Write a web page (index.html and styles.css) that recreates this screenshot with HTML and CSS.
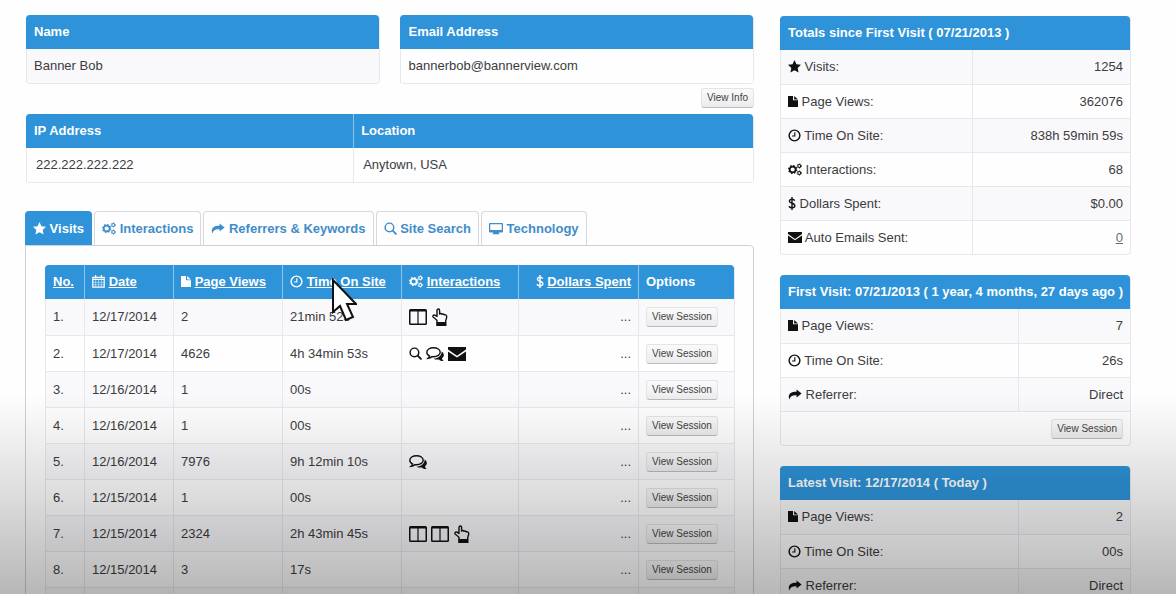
FILE: index.html
```html
<!DOCTYPE html>
<html lang="en">
<head>
    <meta charset="UTF-8">
    <meta name="viewport" content="width=device-width, initial-scale=1.0">
    <title>Visitor Details</title>
    <link rel="stylesheet" href="styles.css">
</head>
<body>

<!-- Icons -->
<svg class="sprite" aria-hidden="true">
    <symbol id="star" viewBox="0 0 16 16"><path d="M8 0l2.400 5.200 5.600.7-4.100 3.900 1.100 5.700L8 12.700 3 15.500l1.100-5.700L0 5.900l5.600-.7z"/></symbol>
    <symbol id="file" viewBox="0 0 13 16"><path d="M0 1h6.500v5.500H13V15H0zM8 1l5 4.500H8z"/></symbol>
    <symbol id="clock" viewBox="0 0 16 16"><circle cx="8" cy="8" r="6.600" fill="none" stroke="currentColor" stroke-width="1.800"/><path d="M8.400 4v4.600H5" fill="none" stroke="currentColor" stroke-width="1.400"/></symbol>
    <symbol id="cogs" viewBox="0 0 18 16">
        <circle cx="6" cy="8" r="3.800" fill="none" stroke="currentColor" stroke-width="2.200"/>
        <circle cx="6" cy="8" r="5.200" fill="none" stroke="currentColor" stroke-width="1.500" stroke-dasharray="2.040 2.040"/>
        <circle cx="14.500" cy="3.500" r="1.900" fill="none" stroke="currentColor" stroke-width="1.400"/>
        <circle cx="14.500" cy="3.500" r="2.900" fill="none" stroke="currentColor" stroke-width=".9" stroke-dasharray="1.500 1.540"/>
        <circle cx="14.500" cy="12.500" r="1.900" fill="none" stroke="currentColor" stroke-width="1.400"/>
        <circle cx="14.500" cy="12.500" r="2.900" fill="none" stroke="currentColor" stroke-width=".9" stroke-dasharray="1.500 1.540"/>
    </symbol>
    <symbol id="dollar" viewBox="0 0 9 16"><path d="M4.500 0v16M8 4.500C7.200 3.300 6 2.700 4.500 2.700c-1.900 0-3.200.9-3.200 2.400C1.300 8.400 8 7 8 10.800c0 1.500-1.400 2.500-3.400 2.500-1.600 0-3-.6-3.900-1.900" fill="none" stroke="currentColor" stroke-width="1.700"/></symbol>
    <symbol id="envelope" viewBox="0 0 18 16"><path d="M0 1h18v2.600L9 9.800 0 3.600zM0 5.400l9 6.200 9-6.200V15H0z"/></symbol>
    <symbol id="share" viewBox="0 0 18 16"><path d="M11 1.500l6.500 5.300L11 12V8.900c-5-.4-8 .8-9.200 5.600C-.8 8.300 3 4.300 11 4.500z"/></symbol>
    <symbol id="search" viewBox="0 0 16 16"><circle cx="6.700" cy="6.700" r="5.300" fill="none" stroke="currentColor" stroke-width="1.800"/><path d="M10.700 10.700l4 4" stroke="currentColor" stroke-width="2.200" stroke-linecap="round"/></symbol>
    <symbol id="desktop" viewBox="0 0 18 16"><path fill-rule="evenodd" d="M1 1h16q1 0 1 1v10q0 1-1 1h-4.500l.8 2.500H4.700l.8-2.500H1q-1 0-1-1V2q0-1 1-1zm.6 1.500V10h14.800V2.500z"/></symbol>
    <symbol id="calendar" viewBox="0 0 16 16"><path d="M1 3h14v12H1zM1 5.500h14M4.500 0v4M11.500 0v4" fill="none" stroke="currentColor" stroke-width="1.500"/><path d="M1 9h14M1 12h14M4.500 6v9M8 6v9M11.500 6v9" fill="none" stroke="currentColor" stroke-width=".6"/></symbol>
    <symbol id="columns" viewBox="0 0 18 16"><path fill-rule="evenodd" d="M1.500 0h15Q18 0 18 1.500v13q0 1.500-1.500 1.500h-15Q0 16 0 14.500v-13Q0 0 1.500 0zm0 2.500v12h6.900v-12zm8.100 0v12h6.900v-12z"/></symbol>
    <symbol id="hand" viewBox="0 0 16 18"><path d="M5 14v-1.500C4 11 2.600 10.300 1.300 9.300.2 8.200 1.300 6.500 2.900 7.100L5 8.400V2.500c0-2 2.600-2 2.600 0V6c.6-.8 1.900-.7 2.300.3.800-.6 1.900-.3 2.200.6 1.500-.5 2.600.3 2.600 1.800 0 2-1 2.800-1 4.300v1" fill="none" stroke="currentColor" stroke-width="1.400" stroke-linejoin="round"/><path d="M4.200 14h10.300v4H4.200z"/></symbol>
    <symbol id="comments" viewBox="0 0 18 16"><path d="M15.700 5.500C18.500 7.500 18.600 10.500 16 12.200q.2 1.600 1.600 2.700c-2 .2-3.500-.4-4.700-1.500-2 .3-3.900.1-5.400-.7 4.700-.2 8.200-3 8.200-7.200z"/><path d="M7.500 1.700c3.900 0 6.700 2 6.700 4.500s-2.800 4.500-6.700 4.500l-1.500-.1q-1.700 1.400-3.900 1.700 1.300-1.200 1.400-2.500C1.800 9 .8 7.700.8 6.200c0-2.500 2.800-4.500 6.700-4.500z" fill="none" stroke="currentColor" stroke-width="1.400"/></symbol>
</svg>

<div class="page">
    <main class="main">
        <div class="contact">
            <table class="grid">
                <thead><tr><th>Name</th></tr></thead>
                <tbody><tr><td>Banner Bob</td></tr></tbody>
            </table>
            <div class="email">
                <table class="grid plain">
                    <thead><tr><th>Email Address</th></tr></thead>
                    <tbody><tr><td>bannerbob@bannerview.com</td></tr></tbody>
                </table>
                <button class="btn" type="button">View Info</button>
            </div>
        </div>

        <div class="location">
            <table class="grid plain">
                <thead><tr><th class="ip">IP Address</th><th>Location</th></tr></thead>
                <tbody><tr><td>222.222.222.222</td><td>Anytown, USA</td></tr></tbody>
            </table>
        </div>

        <nav class="tabs">
            <a class="active" href="#visits"><svg class="icon"><use href="#star"/></svg> Visits</a>
            <a href="#interactions"><svg class="icon wide"><use href="#cogs"/></svg> Interactions</a>
            <a href="#referrers"><svg class="icon wide"><use href="#share"/></svg> Referrers &amp; Keywords</a>
            <a href="#site-search"><svg class="icon"><use href="#search"/></svg> Site Search</a>
            <a href="#technology"><svg class="icon wide"><use href="#desktop"/></svg> Technology</a>
        </nav>

        <section class="panel" id="visits">
            <table class="grid visits">
                <thead>
                    <tr>
                        <th class="col-no"><a href="#no">No.</a></th>
                        <th class="col-date"><svg class="icon"><use href="#calendar"/></svg> <a href="#date">Date</a></th>
                        <th class="col-views"><svg class="icon slim"><use href="#file"/></svg> <a href="#views">Page Views</a></th>
                        <th class="col-time"><svg class="icon"><use href="#clock"/></svg> <a href="#time">Time On Site</a></th>
                        <th class="col-inter"><svg class="icon wide"><use href="#cogs"/></svg> <a href="#inter">Interactions</a></th>
                        <th class="col-spent"><svg class="icon thin"><use href="#dollar"/></svg> <a href="#spent">Dollars Spent</a></th>
                        <th class="col-options">Options</th>
                    </tr>
                </thead>
                <tbody>
                    <tr>
                        <td>1.</td><td>12/17/2014</td><td>2</td><td>21min 52s</td>
                        <td><div class="actions"><svg><use href="#columns"/></svg><svg class="hand"><use href="#hand"/></svg></div></td>
                        <td>...</td><td><button class="btn" type="button">View Session</button></td>
                    </tr>
                    <tr>
                        <td>2.</td><td>12/17/2014</td><td>4626</td><td>4h 34min 53s</td>
                        <td><div class="actions"><svg class="small"><use href="#search"/></svg><svg><use href="#comments"/></svg><svg><use href="#envelope"/></svg></div></td>
                        <td>...</td><td><button class="btn" type="button">View Session</button></td>
                    </tr>
                    <tr>
                        <td>3.</td><td>12/16/2014</td><td>1</td><td>00s</td><td></td>
                        <td>...</td><td><button class="btn" type="button">View Session</button></td>
                    </tr>
                    <tr>
                        <td>4.</td><td>12/16/2014</td><td>1</td><td>00s</td><td></td>
                        <td>...</td><td><button class="btn" type="button">View Session</button></td>
                    </tr>
                    <tr>
                        <td>5.</td><td>12/16/2014</td><td>7976</td><td>9h 12min 10s</td>
                        <td><div class="actions"><svg><use href="#comments"/></svg></div></td>
                        <td>...</td><td><button class="btn" type="button">View Session</button></td>
                    </tr>
                    <tr>
                        <td>6.</td><td>12/15/2014</td><td>1</td><td>00s</td><td></td>
                        <td>...</td><td><button class="btn" type="button">View Session</button></td>
                    </tr>
                    <tr>
                        <td>7.</td><td>12/15/2014</td><td>2324</td><td>2h 43min 45s</td>
                        <td><div class="actions"><svg><use href="#columns"/></svg><svg><use href="#columns"/></svg><svg class="hand"><use href="#hand"/></svg></div></td>
                        <td>...</td><td><button class="btn" type="button">View Session</button></td>
                    </tr>
                    <tr>
                        <td>8.</td><td>12/15/2014</td><td>3</td><td>17s</td><td></td>
                        <td>...</td><td><button class="btn" type="button">View Session</button></td>
                    </tr>
                    <tr><td></td><td></td><td></td><td></td><td></td><td></td><td></td></tr>
                </tbody>
            </table>
        </section>
    </main>

    <aside class="sidebar">
        <table class="grid stats totals">
            <thead><tr><th colspan="2">Totals since First Visit ( 07/21/2013 )</th></tr></thead>
            <tbody>
                <tr><td><svg class="icon"><use href="#star"/></svg> Visits:</td><td>1254</td></tr>
                <tr><td><svg class="icon slim"><use href="#file"/></svg> Page Views:</td><td>362076</td></tr>
                <tr><td><svg class="icon"><use href="#clock"/></svg> Time On Site:</td><td>838h 59min 59s</td></tr>
                <tr><td><svg class="icon wide"><use href="#cogs"/></svg> Interactions:</td><td>68</td></tr>
                <tr><td><svg class="icon thin"><use href="#dollar"/></svg> Dollars Spent:</td><td>$0.00</td></tr>
                <tr><td><svg class="icon wide"><use href="#envelope"/></svg> Auto Emails Sent:</td><td><a href="#emails">0</a></td></tr>
            </tbody>
        </table>

        <table class="grid stats">
            <thead><tr><th colspan="2">First Visit: 07/21/2013 ( 1 year, 4 months, 27 days ago )</th></tr></thead>
            <tbody>
                <tr><td><svg class="icon slim"><use href="#file"/></svg> Page Views:</td><td>7</td></tr>
                <tr><td><svg class="icon"><use href="#clock"/></svg> Time On Site:</td><td>26s</td></tr>
                <tr><td><svg class="icon wide"><use href="#share"/></svg> Referrer:</td><td>Direct</td></tr>
                <tr><td colspan="2"><button class="btn" type="button">View Session</button></td></tr>
            </tbody>
        </table>

        <table class="grid stats">
            <thead><tr><th colspan="2">Latest Visit: 12/17/2014 ( Today )</th></tr></thead>
            <tbody>
                <tr><td><svg class="icon slim"><use href="#file"/></svg> Page Views:</td><td>2</td></tr>
                <tr><td><svg class="icon"><use href="#clock"/></svg> Time On Site:</td><td>00s</td></tr>
                <tr><td><svg class="icon wide"><use href="#share"/></svg> Referrer:</td><td>Direct</td></tr>
            </tbody>
        </table>
    </aside>
</div>

<svg class="cursor" viewBox="0 0 26 44" aria-hidden="true"><path d="M2 3v32l7-6 6 14 7-3-6-13h9z" fill="#fff" stroke="#111" stroke-width="2"/></svg>
<div class="fade"></div>

</body>
</html>
```
FILE: styles.css
```css
* {
    box-sizing: border-box;
}
body {
    margin: 0;
    height: 100vh;
    overflow: hidden;
    background-color: #fefefe;
    color: #3c3c40;
    font-family: "Liberation Sans", Arial, sans-serif;
    font-size: 13px;
    line-height: 18px;
}
.sprite {
    display: none;
}
.page {
    display: flex;
    gap: 26px;
    padding: 15px 45px 0 25px;
}
.main {
    flex: 1;
    min-width: 0;
}
.sidebar {
    flex: 0 0 350px;
    display: flex;
    flex-direction: column;
    gap: 20px;
    padding-top: 1px;
}

/* Tables */
.grid {
    width: 100%;
    table-layout: fixed;
    border-collapse: separate;
    border-spacing: 0;
    border-bottom: 1px solid #e9e7ec;
    border-right: 1px solid #e9e7ec;
    border-radius: 4px;
}
.grid th, .grid td {
    height: 34px;
    padding: 0 7px;
    text-align: left;
    white-space: nowrap;
    border-left: 1px solid #e9e7ec;
}
.grid th {
    background-color: #2e93d8;
    color: #fff;
    border-left-color: #8cc4ea;
}
.grid th:first-child {
    border-left-color: #2e93d8;
    border-top-left-radius: 4px;
}
.grid th:last-child {
    border-top-right-radius: 4px;
}
.grid th a {
    color: #fff;
}
.grid tbody tr + tr td {
    border-top: 1px solid #e9e7ec;
}
.grid tbody tr:nth-child(odd) td {
    background-color: #f9f8fa;
}
.grid.plain tbody tr td {
    background-color: #fefefe;
}
.contact {
    display: flex;
    align-items: flex-start;
    gap: 20px;
    padding-left: 1px;
}
.contact > * {
    flex: 1;
}
.email {
    display: flex;
    flex-direction: column;
    align-items: flex-end;
    gap: 4px;
}
.location {
    padding: 6px 0 28px 1px;
}
.location td {
    padding-left: 9px;
}
.location .ip {
    width: 45%;
}

/* Icons */
.icon {
    width: 13px;
    height: 13px;
    fill: currentColor;
    vertical-align: -2px;
}
.icon.wide {
    width: 14px;
}
.icon.slim {
    width: 10px;
}
.icon.thin {
    width: 8px;
}
.stats .icon, .actions {
    color: #111;
}
.actions {
    display: flex;
    align-items: center;
    gap: 4px;
}
.actions svg {
    width: 18px;
    height: 16px;
    fill: currentColor;
}
.actions .hand {
    height: 18px;
}
.actions .small {
    width: 13px;
    height: 13px;
}

.btn {
    height: 20px;
    padding: 0 5px;
    border: 1px solid #e4e3e6;
    border-bottom-color: #bbb;
    border-radius: 3px;
    background: linear-gradient(#fafafa, #ececee);
    color: #444;
    font-family: inherit;
    font-size: 10px;
    line-height: 16px;
}

/* Tabs */
.tabs {
    display: flex;
    gap: 2px;
}
.tabs a {
    height: 34px;
    padding: 8px 7px;
    border: 1px solid #d9d7df;
    border-bottom: 0;
    border-radius: 4px 4px 0 0;
    color: #3f8dcb;
    font-weight: bold;
    line-height: 18px;
    text-decoration: none;
    white-space: nowrap;
}
.tabs .active {
    background-color: #2e93d8;
    border-color: #2e93d8;
    color: #fff;
}
.panel {
    padding: 19px 20px 20px 19px;
    border: 1px solid #d0ced6;
    border-top-right-radius: 4px;
}
.visits td {
    height: 36px;
}
.col-no {
    width: 39px;
}
.col-date {
    width: 89px;
}
.col-views {
    width: 109px;
}
.col-time {
    width: 119px;
}
.col-inter {
    width: 117px;
}
.col-spent {
    width: 120px;
}
.col-options {
    width: 96px;
}
.visits th:nth-child(6), .visits td:nth-child(6) {
    text-align: right;
}

/* Sidebar */
.stats {
    table-layout: auto;
}
.stats td:first-child {
    width: 68%;
}
.stats td:last-child {
    text-align: right;
}
.totals td:first-child {
    width: 55%;
}
.stats td a {
    color: #54727f;
}

.cursor {
    position: absolute;
    left: 331px;
    top: 277px;
    width: 26px;
    height: 44px;
}
.fade {
    position: fixed;
    left: 0;
    right: 0;
    bottom: 0;
    height: 200px;
    background: linear-gradient(rgba(0, 0, 0, 0), rgba(0, 0, 0, 0.13) 50%, rgba(0, 0, 0, 0.28));
    pointer-events: none;
}
```
